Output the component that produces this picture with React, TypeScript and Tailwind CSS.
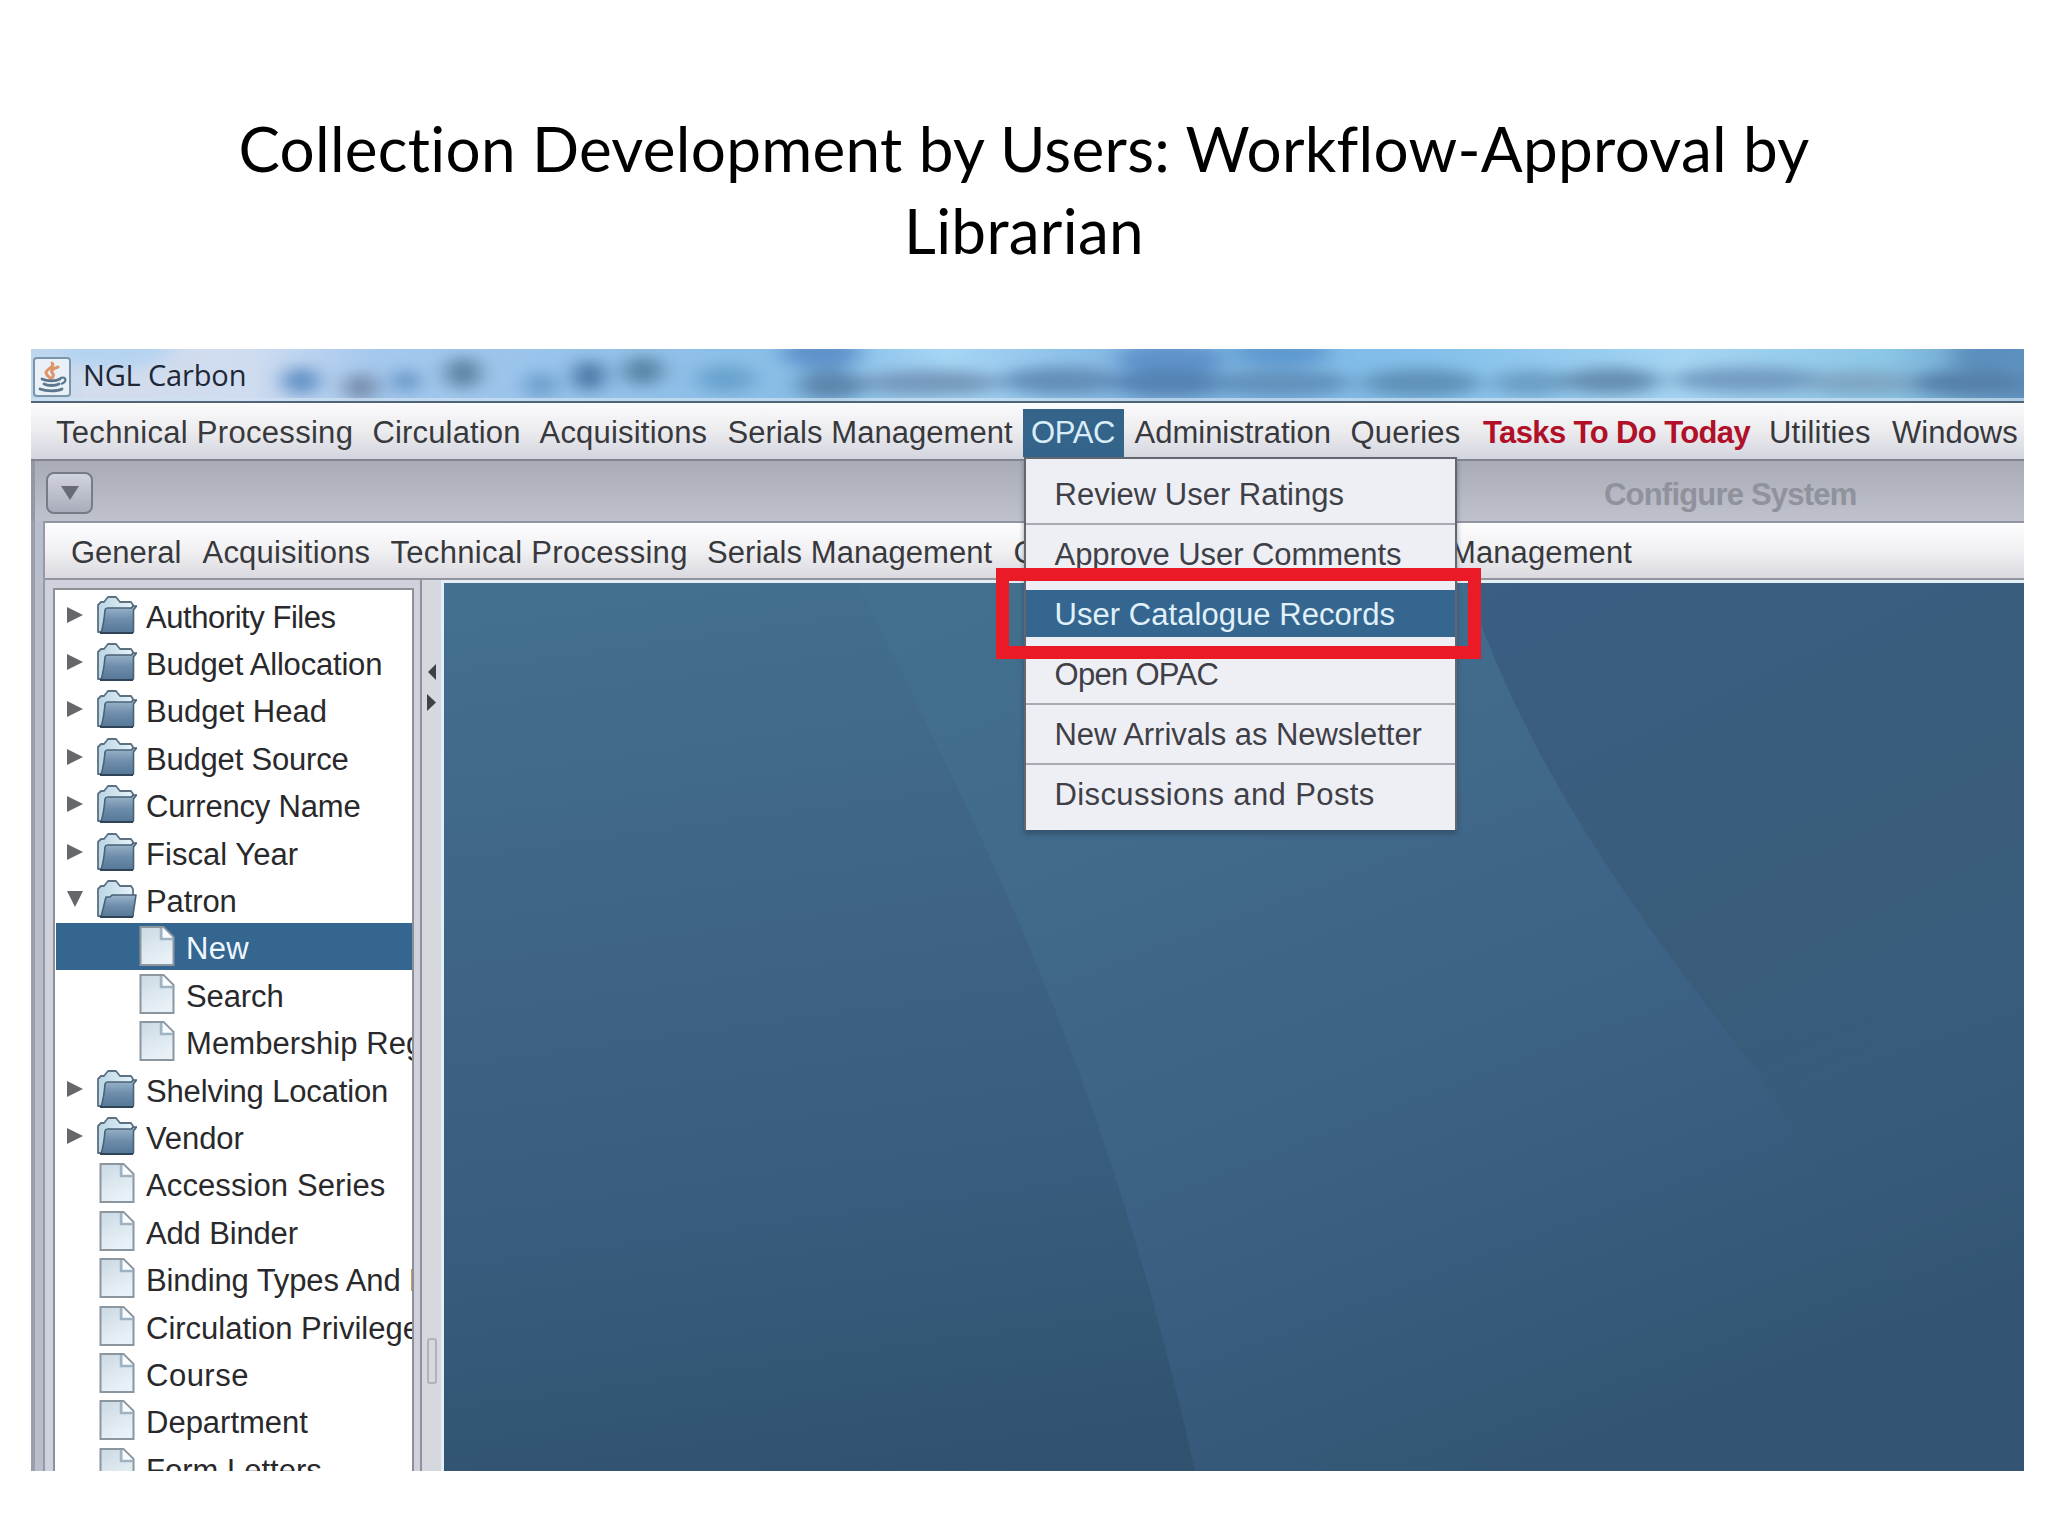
import clsx from 'clsx'

const menuLeft = [
    { label: 'Technical Processing', className: 'w-[316.5px] tracking-[0.3px]' },
    { label: 'Circulation', className: 'w-[167px] tracking-[0.15px]' },
    { label: 'Acquisitions', className: 'w-[188px] tracking-[0.2px]' },
    { label: 'Serials Management', className: 'w-[295px] tracking-[0.05px]' },
]

const menuRight = [
    { label: 'Administration', className: 'w-[216px] tracking-[0px]' },
    { label: 'Queries', className: 'w-[132.5px] tracking-[0.2px]' },
    { label: 'Tasks To Do Today', className: 'w-[286px] font-bold tracking-[-0.6px] text-[#b01028]' },
    { label: 'Utilities', className: 'w-[123px] tracking-[0.2px]' },
    { label: 'Windows', className: 'tracking-[0px]' },
]

const subMenu = [
    { label: 'General', className: 'w-[131.5px] tracking-[0px]' },
    { label: 'Acquisitions', className: 'w-[188px] tracking-[0.2px]' },
    { label: 'Technical Processing', className: 'w-[316.5px] tracking-[0.3px]' },
    { label: 'Serials Management', className: 'w-[306.5px] tracking-[0.05px]' },
    { label: 'C', className: 'w-[436.5px]' },
    { label: 'Management', className: 'tracking-[0.1px]' },
]

const dropdown = [
    { label: 'Review User Ratings', className: 'border-[#a9abb3] tracking-[0px]' },
    { label: 'Approve User Comments', className: 'border-transparent tracking-[-0.05px]' },
    { label: 'User Catalogue Records', className: 'border-transparent tracking-[0.05px]', selected: true },
    { label: 'Open OPAC', className: 'border-[#a9abb3] tracking-[-0.7px]' },
    { label: 'New Arrivals as Newsletter', className: 'border-[#a9abb3] tracking-[-0.05px]' },
    { label: 'Discussions and Posts', className: 'border-transparent tracking-[0.4px]' },
]

type TreeNode = { label: string; kind: 'folder' | 'open' | 'doc' | 'child'; className: string; selected?: boolean }

const tree: TreeNode[] = [
    { label: 'Authority Files', kind: 'folder', className: 'tracking-[-0.45px]' },
    { label: 'Budget Allocation', kind: 'folder', className: 'tracking-[-0.2px]' },
    { label: 'Budget Head', kind: 'folder', className: 'tracking-[0px]' },
    { label: 'Budget Source', kind: 'folder', className: 'tracking-[-0.2px]' },
    { label: 'Currency Name', kind: 'folder', className: 'tracking-[-0.2px]' },
    { label: 'Fiscal Year', kind: 'folder', className: 'tracking-[0.05px]' },
    { label: 'Patron', kind: 'open', className: 'tracking-[-0.1px]' },
    { label: 'New', kind: 'child', className: 'tracking-[0.3px]', selected: true },
    { label: 'Search', kind: 'child', className: 'tracking-[-0.1px]' },
    { label: 'Membership Reg', kind: 'child', className: 'tracking-[0.1px]' },
    { label: 'Shelving Location', kind: 'folder', className: 'tracking-[-0.15px]' },
    { label: 'Vendor', kind: 'folder', className: 'tracking-[-0.1px]' },
    { label: 'Accession Series', kind: 'doc', className: 'tracking-[0.1px]' },
    { label: 'Add Binder', kind: 'doc', className: 'tracking-[-0.15px]' },
    { label: 'Binding Types And D', kind: 'doc', className: 'tracking-[-0.1px]' },
    { label: 'Circulation Privilege', kind: 'doc', className: 'tracking-[0px]' },
    { label: 'Course', kind: 'doc', className: 'tracking-[0.5px]' },
    { label: 'Department', kind: 'doc', className: 'tracking-[0px]' },
    { label: 'Form Letters', kind: 'doc', className: 'tracking-[0px]' },
]

// smudges of the window behind the glass title bar: x, y, rx, ry, colour
const smudges: [number, number, number, number, string][] = [
    [80, 0, 60, 20, '#b4d3f1'],
    [270, 32, 18, 14, '#5f8fc4'],
    [330, 38, 16, 14, '#7289a8'],
    [375, 32, 11, 12, '#5a8bbd'],
    [432, 24, 17, 16, '#5a7f9f'],
    [510, 36, 16, 14, '#6b9fcc'],
    [558, 27, 15, 16, '#4573a3'],
    [612, 22, 20, 15, '#5684a5'],
    [695, 30, 30, 14, '#6aa3cf'],
    [790, 4, 40, 16, '#5f93cb'],
    [800, 36, 34, 15, '#5d86ad'],
    [900, 34, 70, 13, '#7699bd'],
    [1030, 32, 60, 14, '#648fb8'],
    [1140, 10, 55, 16, '#5f93cb'],
    [1140, 34, 60, 14, '#5583b3'],
    [1250, 4, 50, 12, '#5c97cf'],
    [1250, 34, 70, 14, '#6293bd'],
    [1390, 34, 60, 14, '#6192b8'],
    [1500, 34, 40, 13, '#6d9fc4'],
    [1580, 32, 50, 13, '#658eb1'],
    [1720, 31, 80, 13, '#739cc3'],
    [1830, 34, 60, 12, '#7ea6c4'],
    [1940, 34, 60, 13, '#5480a8'],
    [1960, 6, 40, 16, '#5b8fbd'],
]

function GlassBackground() {
    return (
        <svg className="absolute inset-0" width="1993" height="52" viewBox="0 0 1993 52">
            <defs>
                <linearGradient id="glass" x1="0" x2="1" y1="0" y2="0">
                    <stop offset="0" stopColor="#bcd6ee" />
                    <stop offset="0.03" stopColor="#d3dcec" />
                    <stop offset="0.11" stopColor="#cfdcf0" />
                    <stop offset="0.17" stopColor="#a6c9ee" />
                    <stop offset="0.3" stopColor="#93c1e9" />
                    <stop offset="0.4" stopColor="#86bde6" />
                    <stop offset="0.46" stopColor="#a6d6f5" />
                    <stop offset="0.56" stopColor="#7fb3e0" />
                    <stop offset="0.7" stopColor="#83bfea" />
                    <stop offset="0.83" stopColor="#a5d5f3" />
                    <stop offset="0.93" stopColor="#8cc6e6" />
                    <stop offset="1" stopColor="#5f93c0" />
                </linearGradient>
                <filter id="soft" filterUnits="userSpaceOnUse" x="-50" y="-50" width="2100" height="150">
                    <feGaussianBlur stdDeviation="11 7" />
                </filter>
            </defs>
            <rect width="1993" height="52" fill="url(#glass)" />
            <g filter="url(#soft)">
                {smudges.map(([x, y, rx, ry, fill], i) => (
                    <ellipse key={i} cx={x} cy={y} rx={rx} ry={ry} fill={fill} />
                ))}
            </g>
            <rect y="49" width="1993" height="3" fill="#cfe3f2" opacity="0.7" />
        </svg>
    )
}

function JavaIcon() {
    return (
        <svg className="relative ml-[2px] mt-1" width="38" height="40" viewBox="0 0 38 40">
            <rect x="1" y="1" width="36" height="38" rx="3" fill="#e9f1f7" stroke="#7b95ab" strokeWidth="2" />
            <path d="M19 6c4 4-7 6-6 10 .5 3 4 4 5 6M25 10c-6 2-8 4-5 7 1 2 0 3-1 4" fill="none" stroke="#dd9468" strokeWidth="3" strokeLinecap="round" />
            <path d="M9 22c5 2.500 14 2.500 18 0M11 27c4 2 11 2 15 0M7 32c6 2.500 17 2.500 22 0" fill="none" stroke="#5c7690" strokeWidth="2.800" strokeLinecap="round" />
            <path d="M27 21c7-2 7 4 1 6" fill="none" stroke="#5c7690" strokeWidth="2.200" />
        </svg>
    )
}

function FolderIcon({ open }: { open: boolean }) {
    return (
        <svg width="40" height="40" viewBox="0 0 40 40" className="shrink-0">
            <defs>
                <linearGradient id="folderFront" x1="0" x2="0" y1="0" y2="1">
                    <stop offset="0" stopColor="#9db7cc" />
                    <stop offset="0.5" stopColor="#6d8dab" />
                    <stop offset="1" stopColor="#557795" />
                </linearGradient>
                <linearGradient id="folderBack" x1="0" x2="1" y1="0" y2="0">
                    <stop offset="0" stopColor="#b9d5e4" />
                    <stop offset="1" stopColor="#e6f3f9" />
                </linearGradient>
            </defs>
            <path d="M1 37V10l3-3h3l4-5h8l4 5h11l2 3V37z" fill="url(#folderBack)" stroke="#5b7081" strokeWidth="1.800" strokeLinejoin="round" />
            {open ? (
                <path d="M9 18h4l2-2h24l-3 20q0 2-2 2H4z" fill="url(#folderFront)" stroke="#4a6277" strokeWidth="1.600" strokeLinejoin="round" />
            ) : (
                <path d="M8 15q.5-2 2.500-2h24l1.500-2h3.500l-3 4v21q0 2-2 2H4q3-10 4-23z" fill="url(#folderFront)" stroke="#4a6277" strokeWidth="1.600" strokeLinejoin="round" />
            )}
            <path d="M3 38h33" stroke="#2f4557" strokeWidth="2" />
        </svg>
    )
}

function DocIcon() {
    return (
        <svg width="36" height="40" viewBox="0 0 36 40" className="shrink-0">
            <defs>
                <linearGradient id="page" x1="0" x2="0.4" y1="0" y2="1">
                    <stop offset="0" stopColor="#ccd9e3" />
                    <stop offset="1" stopColor="#e8f1f7" />
                </linearGradient>
            </defs>
            <path d="M1.500 1h23l10 10v28h-33z" fill="url(#page)" stroke="#8c969f" strokeWidth="2" />
            <path d="M22 2v11h11.500" fill="none" stroke="#9fb2c1" strokeWidth="2.500" />
            <path d="M24 2l9.500 9.500H24z" fill="#f8fcff" />
        </svg>
    )
}

function Row({ node }: { node: TreeNode }) {
    const branch = node.kind === 'folder' || node.kind === 'open'
    return (
        <div className={clsx('flex h-[47.4px] shrink-0 items-center', node.selected && 'bg-[#34668f] text-[#eef7ff]')}>
            {branch ? (
                <>
                    <svg className="ml-[10px] mr-[13px] shrink-0" width="18" height="18" viewBox="0 0 18 18">
                        <path d={node.kind === 'open' ? 'M1 1h16L9 17z' : 'M1 1v16l16-8z'} fill="#66676b" />
                    </svg>
                    <FolderIcon open={node.kind === 'open'} />
                    <span className="w-[9px]" />
                </>
            ) : (
                <>
                    <span className={clsx('shrink-0', node.kind === 'child' ? 'w-[83px]' : 'w-[42.5px]')} />
                    <DocIcon />
                    <span className={clsx('shrink-0', node.kind === 'child' ? 'w-[11px]' : 'w-[11.5px]')} />
                </>
            )}
            <span className={clsx('whitespace-nowrap pt-[5px]', node.className)}>{node.label}</span>
        </div>
    )
}

function DesktopBackground() {
    return (
        <svg className="absolute inset-0" width="1580" height="888" viewBox="0 0 1580 888">
            <defs>
                <linearGradient id="base" x1="0.1" x2="0.35" y1="0" y2="1">
                    <stop offset="0" stopColor="#436f90" />
                    <stop offset="0.4" stopColor="#3e6385" />
                    <stop offset="0.7" stopColor="#385c7d" />
                    <stop offset="1" stopColor="#30526f" />
                </linearGradient>
                <linearGradient id="beam" x1="0.1" x2="0.6" y1="0" y2="1">
                    <stop offset="0" stopColor="#43708f" />
                    <stop offset="0.35" stopColor="#40688a" />
                    <stop offset="0.65" stopColor="#3b6083" />
                    <stop offset="1" stopColor="#335573" />
                </linearGradient>
                <linearGradient id="shade" x1="0" x2="0.3" y1="0" y2="1">
                    <stop offset="0" stopColor="#3a5e84" />
                    <stop offset="0.5" stopColor="#3a5c7a" />
                    <stop offset="0.75" stopColor="#395a7a" stopOpacity="0.5" />
                    <stop offset="1" stopColor="#375877" stopOpacity="0" />
                </linearGradient>
            </defs>
            <rect width="1580" height="888" fill="url(#base)" />
            <path d="M414 0C540 260 660 480 751 888H1580V0z" fill="url(#beam)" />
            <path d="M1022 0C1090 200 1200 340 1312 487Q1420 660 1580 888V0z" fill="url(#shade)" />
        </svg>
    )
}

export default function App() {
    return (
        <div className="w-[2048px] h-[1536px] bg-white overflow-hidden flex flex-col">
            <h1 className="h-[349px] pt-[107px] text-center font-['Lato',sans-serif] text-[62px] leading-[82px] tracking-[0.3px] text-black">
                Collection Development by Users: Workflow-Approval by
                <br />
                Librarian
            </h1>

            <div className="ml-[31px] w-[1993px] h-[1122px] flex flex-col overflow-hidden bg-[#cfd1dd] font-['Liberation_Sans',sans-serif] text-[31px] leading-none text-[#38393d]">
                {/* Title bar */}
                <div className="relative h-[52px] shrink-0 flex items-center">
                    <GlassBackground />
                    <JavaIcon />
                    <span className="relative ml-[12px] pb-[2px] font-['Open_Sans',sans-serif] text-[29px] tracking-[-0.15px] text-[#1d2736]">NGL Carbon</span>
                </div>

                {/* Main menu */}
                <div className="h-[60px] shrink-0 flex items-center pl-[25px] pt-[3px] border-t-2 border-t-[#4f6577] border-b-2 border-b-[#82848e] bg-linear-to-b from-[#fbfbfc] via-[#ececef] to-[#d3d5df] whitespace-nowrap">
                    {menuLeft.map((m) => (
                        <span key={m.label} className={clsx('shrink-0', m.className)}>{m.label}</span>
                    ))}
                    <div className="relative w-[101px] h-[48px] shrink-0 bg-[#34648a] text-[#d8edf8] flex items-center justify-center tracking-[-0.4px]">
                        OPAC
                        <div className="absolute z-10 left-px top-[48px] w-[433px] h-[373px] pt-[6px] border-2 border-b-0 border-[#626671] bg-[#eeeff5] text-[#3f4047] shadow-[0_4px_5px_rgba(40,55,75,0.45)]">
                            {dropdown.map((d) => (
                                <div key={d.label} className={clsx('h-[60px] flex items-center border-b-2', d.className)}>
                                    <span className={clsx('w-full pl-[29px] h-[47px] pt-[9px]', d.selected && 'bg-[#34668f] text-[#e0f1fb]')}>{d.label}</span>
                                </div>
                            ))}
                        </div>
                        {/* Highlight frame */}
                        <div className="absolute z-20 left-[-27px] top-[159px] w-[485px] h-[91px] border-[13px] border-[#ea1b26]" />
                    </div>
                    <span className="w-[11px] shrink-0" />
                    {menuRight.map((m) => (
                        <span key={m.label} className={clsx('shrink-0', m.className)}>{m.label}</span>
                    ))}
                </div>

                {/* Toolbar */}
                <div className="h-[60px] shrink-0 flex items-center border-l-4 border-l-[#9497a4] bg-linear-to-b from-[#a9acb5] to-[#bfc1cc]">
                    <div className="ml-[11px] mt-[3px] w-[47px] h-[42px] rounded-[8px] border-2 border-[#777a87] bg-linear-to-b from-[#d1d3df] to-[#a9acba] flex items-center justify-center">
                        <svg width="18" height="14" viewBox="0 0 18 14"><path d="M0 0h18L9 14z" fill="#686b77" /></svg>
                    </div>
                    <span className="ml-[1511px] pt-[6px] font-bold tracking-[-0.8px] text-[#8f919d]">Configure System</span>
                </div>

                <div className="flex flex-1 min-h-0">
                    <div className="w-[14px] shrink-0 flex">
                        <span className="w-[4px] bg-[#9b9fac]" />
                        <span className="w-[8px] bg-[#b9becc]" />
                        <span className="w-[2px] bg-[#9699a6]" />
                    </div>

                    <div className="flex-1 min-w-0 flex flex-col">
                        <div className="h-[59px] shrink-0 flex items-center pl-[26px] pt-[4px] border-y-2 border-y-[#92949f] bg-linear-to-b from-[#fdfdfe] via-[#f1f1f4] to-[#d9d9df] whitespace-nowrap">
                            {subMenu.map((m) => (
                                <span key={m.label} className={clsx('shrink-0', m.className)}>{m.label}</span>
                            ))}
                        </div>

                        <div className="flex flex-1 min-h-0">
                            {/* Tree */}
                            <div className="w-[361px] shrink-0 ml-[8px] mt-[8px] pt-px pl-px flex flex-col overflow-hidden bg-white border-2 border-b-0 border-[#8e9098] text-[#29292c]">
                                {tree.map((n) => <Row key={n.label} node={n} />)}
                            </div>

                            {/* Splitter */}
                            <div className="w-[27px] shrink-0 pl-[6px] flex">
                                <span className="w-[2px] bg-[#8f919b]" />
                                <div className="flex-1 flex flex-col bg-[#d6d8e0] pt-[84px] pl-[5px]">
                                    <svg width="10" height="47" viewBox="0 0 10 47" className="shrink-0">
                                        <path d="M9 0v16L1 8z" fill="#3f4149" />
                                        <path d="M0 30v17l9-8.500z" fill="#3f4149" />
                                    </svg>
                                    <span className="mt-[627px] w-[10px] h-[46px] shrink-0 rounded-[3px] border-2 border-[#b0b2ba]" />
                                </div>
                            </div>
                            <div className="w-[3px] shrink-0 bg-[#e4eef5]" />

                            {/* Desktop */}
                            <div className="flex-1 flex flex-col pt-[3px] overflow-hidden bg-[#e4eef5]">
                                <div className="relative flex-1 overflow-hidden">
                                    <DesktopBackground />
                                </div>
                            </div>
                        </div>
                    </div>
                </div>
            </div>
        </div>
    )
}
